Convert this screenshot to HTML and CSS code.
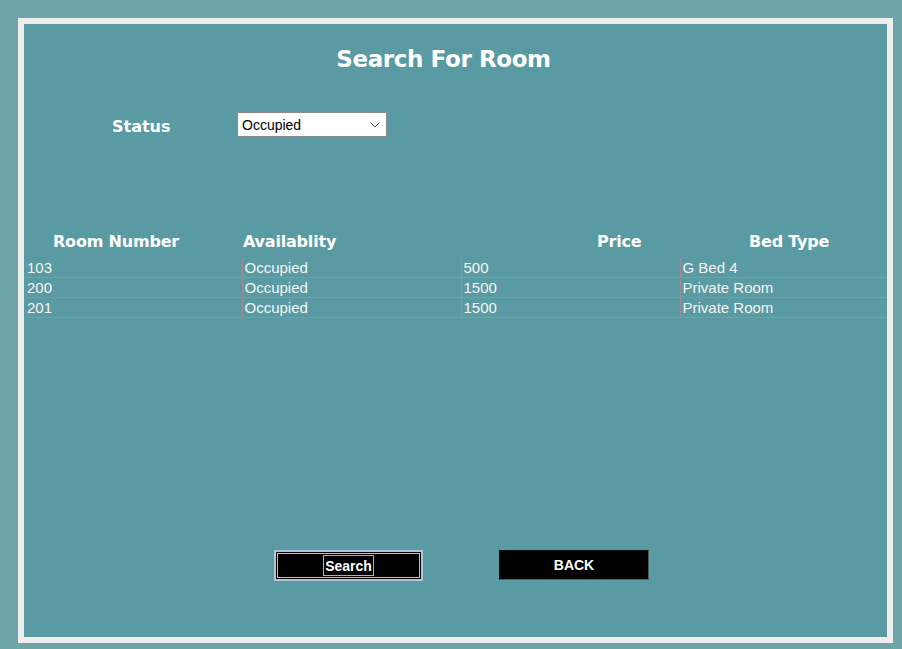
FILE: index.html
```html
<!DOCTYPE html>
<html>
<head>
<meta charset="utf-8">
<link rel="stylesheet" href="styles.css">
</head>
<body>
<div class="frame">
  <h1 class="title">Search For Room</h1>
  <div class="status-row">
    <label class="status-label">Status</label>
    <div class="select">
      <span>Occupied</span>
      <svg class="chev" width="10" height="6" viewBox="0 0 10 6"><path d="M0.5 0.5 L5 5 L9.5 0.5" fill="none" stroke="#444" stroke-width="1"/></svg>
    </div>
  </div>
  <div class="head-row">
    <span class="h1c">Room Number</span>
    <span class="h2c">Availablity</span>
    <span class="h3c">Price</span>
    <span class="h4c">Bed Type</span>
  </div>
  <table class="grid">
    <colgroup><col class="c1"><col class="c2"><col class="c3"><col class="c4"></colgroup>
    <tr><td>103</td><td>Occupied</td><td>500</td><td>G Bed 4</td></tr>
    <tr><td>200</td><td>Occupied</td><td>1500</td><td>Private Room</td></tr>
    <tr><td>201</td><td>Occupied</td><td>1500</td><td>Private Room</td></tr>
  </table>
  <div class="buttons">
    <button class="btn btn-search"><span class="focus">Search</span></button>
    <button class="btn btn-back">BACK</button>
  </div>
</div>
</body>
</html>
```
FILE: styles.css
```css
html, body {
  margin: 0;
  padding: 0;
  background: #6ea5a9;
}
body {
  width: 902px;
  height: 649px;
  overflow: hidden;
}
.frame {
  margin: 18px 9px 0 18px;
  width: 863px;
  height: 613px;
  border: 6px solid #eeeeee;
  background: #5a9ba3;
  color: #ffffff;
}
.title {
  margin: 0;
  padding: 20px 24px 0 0;
  text-align: center;
  font-family: "DejaVu Sans", Verdana, sans-serif;
  font-weight: bold;
  font-size: 23px;
  line-height: 30px;
  letter-spacing: -0.4px;
}
.status-row {
  display: flex;
  align-items: center;
  margin-top: 38px;
  padding-left: 88px;
  height: 25px;
}
.status-label {
  width: 125px;
  font-family: "DejaVu Sans", Verdana, sans-serif;
  font-weight: bold;
  font-size: 16px;
  line-height: 25px;
  padding-top: 4px;
}
.select {
  box-sizing: border-box;
  width: 150px;
  height: 25px;
  border: 1px solid #8a8a8a;
  background: #ffffff;
  color: #000;
  display: flex;
  align-items: center;
  justify-content: space-between;
  padding: 0 6px 0 4px;
  font-family: "Liberation Sans", Arial, sans-serif;
  font-size: 14px;
}
.chev { margin-top: 1px; }
.head-row {
  display: grid;
  grid-template-columns: 190px 354px 152px auto;
  padding-left: 29px;
  margin-top: 94px;
  height: 20px;
  line-height: 22px;
  font-family: "DejaVu Sans", Verdana, sans-serif;
  font-weight: bold;
  font-size: 16px;
  letter-spacing: -0.2px;
}
.grid {
  margin-top: 7px;
  width: 863px;
  border-collapse: collapse;
  table-layout: fixed;
  font-family: "Liberation Sans", Arial, sans-serif;
  font-size: 15px;
  color: #f4f4f4;
}
.c1 { width: 218px; }
.c2 { width: 219px; }
.c3 { width: 219px; }
.c4 { width: auto; }
.grid td {
  height: 19px;
  padding: 0 0 0 2px;
  line-height: 19px;
  border-bottom: 1px solid #a08c97;
  border-left: 1px solid #a08c97;
  vertical-align: middle;
  white-space: nowrap;
}
.grid td:first-child {
  border-left: none;
  padding-left: 3px;
}
.buttons {
  display: flex;
  margin-top: 232px;
  padding-left: 250px;
  gap: 76px;
}
.btn {
  font-family: "Liberation Sans", Arial, sans-serif;
  font-weight: bold;
  font-size: 14px;
  color: #ffffff;
  background: #000000;
  cursor: pointer;
  padding: 0;
  margin: 0;
  display: flex;
  align-items: center;
  justify-content: center;
}
.btn-search {
  width: 149px;
  height: 31px;
  border: 2px solid #b3c3da;
  box-shadow: inset 0 0 0 1px #000, inset 0 0 0 2px #b3c3da;
}
.focus {
  border: 1px solid #9fb0c8;
  padding: 2px 1px 1px 1px;
  line-height: 16px;
}
.btn-back {
  width: 150px;
  height: 30px;
  border: 1px solid #555c60;
  border-top-color: #111;
  border-left-color: #111;
}
```
